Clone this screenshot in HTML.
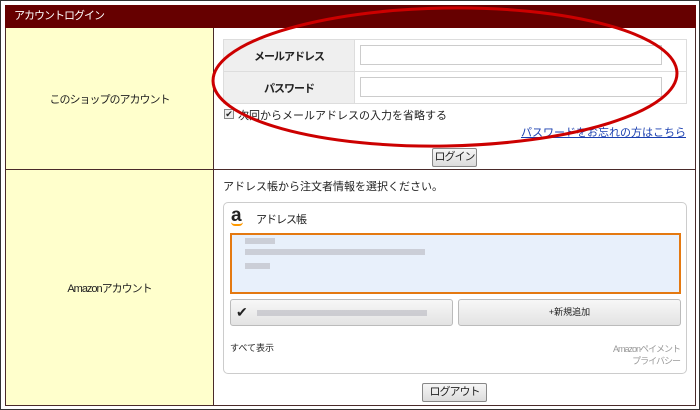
<!DOCTYPE html>
<html><head><meta charset="utf-8"><style>
*{box-sizing:border-box;margin:0;padding:0}
body{width:700px;height:410px;background:#fff;position:relative;overflow:hidden;font-family:"Liberation Sans","Noto Sans CJK JP",sans-serif;font-size:11px;color:#222;white-space:nowrap}
.a{position:absolute}
.k{letter-spacing:-1px}
.btn{position:absolute;background:linear-gradient(#f6f6f6,#dcdcdc);border:1px solid #888;font-size:11px;text-align:center;line-height:17px;border-radius:2px}
.blur{position:absolute;background:#b8b8c0;opacity:.6}
</style></head><body>
<div class="a" style="left:0;top:0;width:700px;height:410px;border:1px solid #333"></div>
<div class="a" style="left:5px;top:5px;width:691px;height:401px;border:1px solid #4a2a2a;background:#fff"></div>
<div class="a k" style="left:5px;top:5px;width:691px;height:23px;background:#660000;color:#fff;font-size:11px;line-height:23px;padding-left:9px">アカウントログイン</div>
<div class="a" style="left:6px;top:28px;width:207px;height:377px;background:#ffffcc"></div>
<div class="a" style="left:213px;top:28px;width:1px;height:377px;background:#4a2a2a"></div>
<div class="a" style="left:6px;top:169px;width:689px;height:1px;background:#4a2a2a"></div>
<div class="a k" style="left:6px;top:91px;width:207px;text-align:center">このショップのアカウント</div>
<div class="a k" style="left:6px;top:280px;width:207px;text-align:center">Amazonアカウント</div>
<div class="a" style="left:223px;top:39px;width:464px;height:65px;border:1px solid #ddd"></div>
<div class="a" style="left:224px;top:40px;width:130px;height:63px;background:#efefef"></div>
<div class="a" style="left:223px;top:71px;width:464px;height:1px;background:#ddd"></div>
<div class="a" style="left:354px;top:40px;width:1px;height:63px;background:#ddd"></div>
<div class="a k" style="left:224px;top:48px;width:130px;text-align:center;font-weight:bold">メールアドレス</div>
<div class="a k" style="left:224px;top:80px;width:130px;text-align:center;font-weight:bold">パスワード</div>
<div class="a" style="left:360px;top:45px;width:302px;height:20px;border:1px solid #ccc"></div>
<div class="a" style="left:360px;top:77px;width:302px;height:20px;border:1px solid #ccc"></div>
<div class="a" style="left:224px;top:109px;width:10px;height:10px;border:1px solid #888;background:#eee;font-size:9px;line-height:9px;text-align:center">✔</div>
<div class="a" style="left:238px;top:107px">次回からメールアドレスの入力を省略する</div>
<div class="a" style="left:520px;top:124px;width:166px;text-align:right;color:#1a3fb0;text-decoration:underline">パスワードをお忘れの方はこちら</div>
<div class="btn k" style="left:432px;top:148px;width:45px;height:19px">ログイン</div>
<div class="a" style="left:223px;top:178px">アドレス帳から注文者情報を選択ください。</div>
<div class="a" style="left:223px;top:202px;width:464px;height:172px;border:1px solid #ccc;border-radius:5px"></div>
<div class="a" style="left:231px;top:206px;font-size:19px;font-weight:bold;line-height:20px">a</div>
<div class="a" style="left:231px;top:222px;width:12px;height:4px;border-bottom:2px solid #f90;border-radius:0 0 8px 8px"></div>
<div class="a k" style="left:256px;top:211px;font-size:11px">アドレス帳</div>
<div class="a" style="left:230px;top:233px;width:451px;height:61px;border:2px solid #e47911;background:#e8f0fb"></div>
<div class="blur" style="left:245px;top:238px;width:30px;height:6px"></div>
<div class="blur" style="left:245px;top:249px;width:180px;height:6px"></div>
<div class="blur" style="left:245px;top:263px;width:25px;height:6px"></div>
<div class="a" style="left:230px;top:299px;width:223px;height:27px;border:1px solid #bbb;border-radius:3px;background:linear-gradient(#f7f7f7,#e3e3e3)"></div>
<div class="a" style="left:236px;top:304px;font-size:14px">✔</div>
<div class="blur" style="left:257px;top:310px;width:170px;height:6px"></div>
<div class="a" style="left:458px;top:299px;width:223px;height:27px;border:1px solid #bbb;border-radius:3px;background:linear-gradient(#f7f7f7,#e3e3e3);font-size:9px;text-align:center;line-height:25px">+新規追加</div>
<div class="a" style="left:230px;top:341px;font-size:9px">すべて表示</div>
<div class="a k" style="left:560px;top:343px;width:120px;text-align:right;font-size:9px;color:#999;line-height:12px">Amazonペイメント<br>プライバシー</div>
<div class="btn k" style="left:422px;top:383px;width:65px;height:19px">ログアウト</div>
<svg class="a" style="left:0;top:0" width="700" height="410"><ellipse cx="445" cy="77" rx="232" ry="69" transform="rotate(-1 445 77)" fill="none" stroke="#cc0000" stroke-width="3"/></svg>
</body></html>
